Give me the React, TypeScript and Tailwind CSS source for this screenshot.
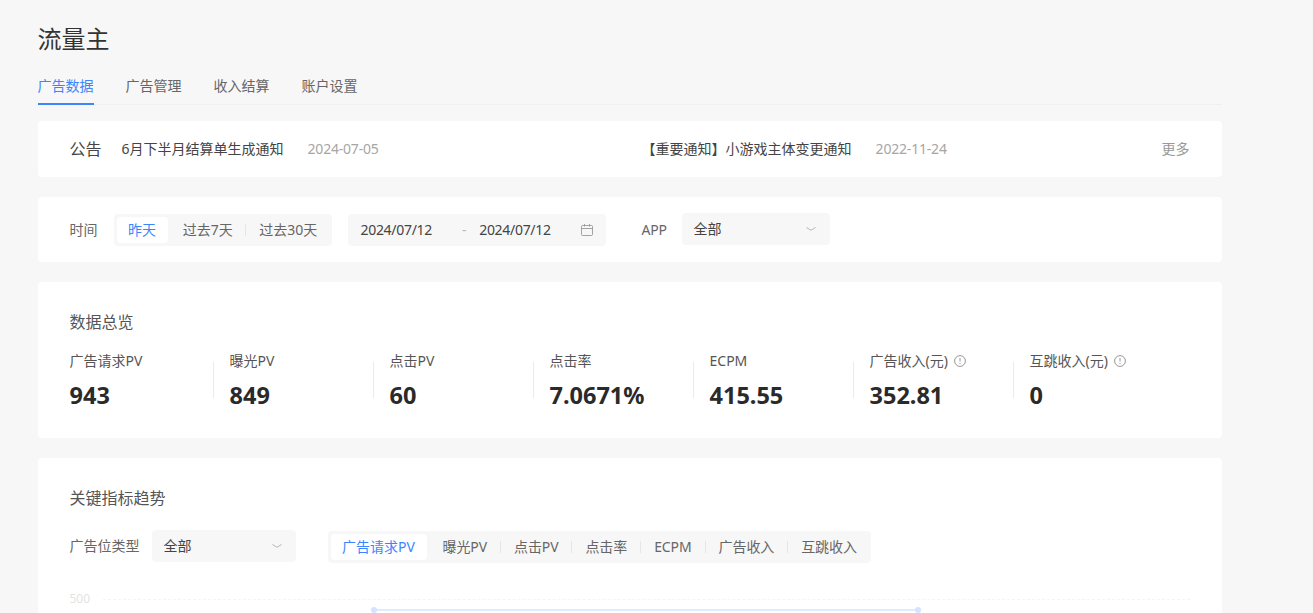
const font = { fontFamily: '"Noto Sans", "Noto Sans CJK SC", sans-serif' }

const stats = [
  { label: '广告请求PV', value: '943' },
  { label: '曝光PV', value: '849' },
  { label: '点击PV', value: '60' },
  { label: '点击率', value: '7.0671%' },
  { label: 'ECPM', value: '415.55' },
  { label: '广告收入(元)', value: '352.81', info: true },
  { label: '互跳收入(元)', value: '0', info: true },
]

const metrics = ['曝光PV', '点击PV', '点击率', 'ECPM', '广告收入', '互跳收入']

function InfoIcon() {
  return (
    <svg width="12" height="12" viewBox="0 0 12 12" fill="none" stroke="#8c8c8c" strokeWidth="0.9" className="ml-[6px]">
      <circle cx="6" cy="6" r="5.4" />
      <path d="M6 3v3.6M6 8v1" />
    </svg>
  )
}

function Select({ width }: { width: string }) {
  return (
    <div className={`flex h-8 items-center justify-between rounded bg-[#f7f7f7] pl-3 pr-[14px] text-sm text-[#444] ${width}`}>
      <span>全部</span>
      <svg width="10" height="4" viewBox="0 0 10 4" fill="none" stroke="#aaa" strokeWidth="0.9">
        <path d="M0.5 0.5C3 2 4 3 5 3S7 2 9.5 0.5" />
      </svg>
    </div>
  )
}

export default function App() {
  return (
    <div style={font} className="h-[613px] overflow-hidden bg-[#f7f7f7] pl-[37.5px] pr-[91.5px] text-[#333]">
      <h1 className="h-[78px] pt-[20.5px] text-2xl leading-[36px] text-[#333]">流量主</h1>

      <div className="flex h-[27px] gap-8 border-b border-[#f0f0f0] text-sm leading-4">
        <div className="h-[27px] border-b-2 border-[#3d85ff] text-[#3d85ff]">广告数据</div>
        <div className="text-[#666]">广告管理</div>
        <div className="text-[#666]">收入结算</div>
        <div className="text-[#666]">账户设置</div>
      </div>

      <div className="mt-4 flex h-14 items-center rounded-sm bg-white pl-8 pr-8 text-sm">
        <span className="w-[52px] text-base text-[#444]">公告</span>
        <span className="text-[#444]">6月下半月结算单生成通知</span>
        <span className="ml-6 tracking-[-0.2px] text-[#a6a6a6]">2024-07-05</span>
        <span className="ml-[263px] text-[#444]">【重要通知】小游戏主体变更通知</span>
        <span className="ml-6 tracking-[-0.2px] text-[#a6a6a6]">2022-11-24</span>
        <span className="ml-auto text-[#999]">更多</span>
      </div>

      <div className="mt-5 flex h-[65px] items-center rounded bg-white pl-8 text-sm">
        <span className="w-11 text-[#666]">时间</span>
        <div className="flex h-8 w-[218px] items-center rounded bg-[#f7f7f7] px-[3px]">
          <div className="flex h-[26px] w-[52px] items-center justify-center rounded bg-white text-[#3d85ff]">昨天</div>
          <div className="flex w-[79px] justify-center pl-[3px] text-[#666]">过去7天</div>
          <div className="h-3 w-px bg-[#e6e6e6]" />
          <div className="flex w-[84px] justify-center pl-[2px] text-[#666]">过去30天</div>
        </div>
        <div className="ml-4 flex h-8 w-[258px] items-center rounded bg-[#f7f7f7] pl-[13px] pr-[13px] tracking-[-0.3px] text-[#444]">
          <span>2024/07/12</span>
          <span className="ml-[30px] text-[#bbb]">-</span>
          <span className="ml-[13px]">2024/07/12</span>
          <svg width="12" height="12" viewBox="0 0 12 12" fill="none" stroke="#999" strokeWidth="0.9" className="ml-auto">
            <rect x="0.5" y="1.5" width="11" height="10" rx="1" />
            <path d="M0.5 4.5h11M3.5 0v2.5M8.5 0v2.5" />
          </svg>
        </div>
        <span className="ml-9 w-10 tracking-[-0.2px] text-[#666]">APP</span>
        <div className="mb-[2px]">
          <Select width="w-[148px]" />
        </div>
      </div>

      <div className="mt-5 h-[156px] rounded bg-white pl-8 pt-[28px]">
        <div className="text-base leading-[24px] text-[#555]">数据总览</div>
        <div className="mt-[28px] flex">
          {stats.map((s, i) => (
            <div key={s.label} className={i === 0 ? 'w-[143px]' : 'h-9 w-40 border-l border-[#ebebeb] pl-4'}>
              <div className="-mt-[11px] flex h-5 items-center text-sm text-[#555]">
                {s.label}
                {s.info && <InfoIcon />}
              </div>
              <div className="mt-2 text-[23.5px] font-bold leading-8 text-[#2a2a2a]">{s.value}</div>
            </div>
          ))}
        </div>
      </div>

      <div className="mt-5 h-[300px] rounded bg-white pl-8 pr-8 pt-[28px]">
        <div className="text-base leading-[24px] text-[#555]">关键指标趋势</div>
        <div className="mt-[19px] flex items-center text-sm">
          <span className="w-[82px] text-[#666]">广告位类型</span>
          <Select width="w-[144px]" />
          <div className="ml-8 mt-[2px] flex h-8 w-[543px] items-center rounded bg-[#f7f7f7] px-[3px] text-[#666]">
            <div className="mr-[3px] flex h-[26px] w-[96px] shrink-0 items-center justify-center rounded bg-white text-[#3d85ff]">广告请求PV</div>
            {metrics.map((m, i) => (
              <div key={m} className="flex shrink-0 items-center whitespace-nowrap">
                {i > 0 && <div className="h-3 w-px bg-[#e6e6e6]" />}
                <div className="px-[13px] tracking-[-0.1px]">{m}</div>
              </div>
            ))}
          </div>
        </div>
        <div className="relative mt-[28px] h-[60px]">
          <div className="flex items-center">
            <span className="w-[33px] text-xs leading-4 text-[#e3e3e3]">500</span>
            <div className="flex-1 border-t border-dashed border-[#f5f5f5]" />
          </div>
          <svg className="absolute left-[296px] top-[16px]" width="560" height="12" viewBox="0 0 560 12" fill="none">
            <path d="M8 3H552" stroke="#e0ebff" strokeWidth="2" />
            <circle cx="8" cy="3" r="3" fill="#d4e3ff" />
            <circle cx="552" cy="3" r="3" fill="#d4e3ff" />
          </svg>
        </div>
      </div>
    </div>
  )
}
